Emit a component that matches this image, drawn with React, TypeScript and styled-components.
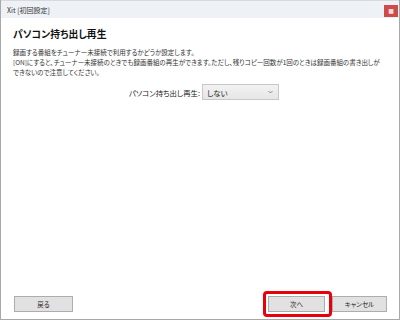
import React from "react";
import styled, { createGlobalStyle } from "styled-components";

const GlobalStyle = createGlobalStyle`
  html, body {
    margin: 0;
    padding: 0;
    background: #ffffff;
  }
  body {
    font-family: "Noto Sans CJK JP", "Noto Sans", sans-serif;
    font-feature-settings: "palt";
  }
`;

const Window = styled.div`
  width: 400px;
  height: 320px;
  box-sizing: border-box;
  display: flex;
  flex-direction: column;
  background: #ffffff;
  border-left: 1px solid #a8a8a8;
  border-right: 1px solid #a8a8a8;
  border-bottom: 1px solid #a8a8a8;
  overflow: hidden;
`;

const TitleBar = styled.div`
  height: 18px;
  flex: none;
  display: flex;
  align-items: center;
  justify-content: space-between;
  padding: 0 1px 0 6px;
  background: #eef2f7;
  border-top: 1px solid #d6d9de;
  box-sizing: border-box;
`;

const TitleText = styled.span`
  font-size: 7px;
  color: #333333;
`;

const CloseButton = styled.div`
  width: 14px;
  height: 12px;
  margin-top: 2px;
  background: #cf4b4b;
  display: flex;
  align-items: center;
  justify-content: center;
  color: #f4dede;
  font-size: 6px;
  line-height: 1;
  font-family: "DejaVu Sans", sans-serif;
`;

const Content = styled.div`
  flex: 1;
  display: flex;
  flex-direction: column;
  padding: 9px 12px 0 12px;
`;

const Heading = styled.h1`
  margin: 0;
  font-size: 9.8px;
  font-weight: 700;
  color: #111111;
  line-height: 14px;
`;

const Description = styled.div`
  margin-top: 7px;
  font-size: 6.5px;
  line-height: 9.8px;
  color: #333333;
`;

const DescLine = styled.div`
  white-space: nowrap;
`;

const SettingRow = styled.div`
  display: flex;
  align-items: center;
  justify-content: center;
  gap: 2px;
  margin-top: 7px;
  padding-left: 8px;
`;

const SettingLabel = styled.span`
  font-size: 7.4px;
  color: #222222;
`;

const SelectBox = styled.div`
  width: 77px;
  height: 16px;
  box-sizing: border-box;
  display: flex;
  align-items: center;
  justify-content: space-between;
  padding: 0 5px 0 4px;
  border: 1px solid #c8c8c8;
  background: linear-gradient(#f2f2f2, #e6e6e6);
  font-size: 7.4px;
  color: #222222;
`;

const Chevron = styled.svg`
  width: 5px;
  height: 4px;
`;

const Footer = styled.div`
  flex: none;
  height: 26px;
  display: flex;
  align-items: flex-start;
  padding: 4px 12px 0 13px;
  box-sizing: border-box;
  margin-bottom: 1px;
`;

const Spacer = styled.div`
  flex: 1;
`;

const Button = styled.div<{ $width: number }>`
  width: ${(p) => p.$width}px;
  height: 16px;
  box-sizing: border-box;
  display: flex;
  align-items: center;
  justify-content: center;
  background: #e1e1e1;
  border: 1px solid #adadad;
  font-size: 6.5px;
  color: #222222;
`;

const Highlight = styled.div`
  position: relative;
  margin-right: 7px;

  &::after {
    content: "";
    position: absolute;
    left: -5px;
    right: -7px;
    top: -5px;
    bottom: -5px;
    border: 3px solid #e8000b;
    border-radius: 4px;
  }
`;

export default function App() {
  return (
    <>
      <GlobalStyle />
      <Window>
        <TitleBar>
          <TitleText>Xit [初回設定]</TitleText>
          <CloseButton>■</CloseButton>
        </TitleBar>
        <Content>
          <Heading>パソコン持ち出し再生</Heading>
          <Description>
            <DescLine>録画する番組をチューナー未接続で利用するかどうか設定します。</DescLine>
            <DescLine>
              [ON]にすると、チューナー未接続のときでも録画番組の再生ができます。ただし、残りコピー回数が1回のときは録画番組の書き出しが
            </DescLine>
            <DescLine>できないので注意してください。</DescLine>
          </Description>
          <SettingRow>
            <SettingLabel>パソコン持ち出し再生:</SettingLabel>
            <SelectBox>
              <span>しない</span>
              <Chevron viewBox="0 0 5 4">
                <path d="M0.5 1 L2.5 3 L4.5 1" fill="none" stroke="#777" strokeWidth="0.8" />
              </Chevron>
            </SelectBox>
          </SettingRow>
        </Content>
        <Footer>
          <Button $width={59}>戻る</Button>
          <Spacer />
          <Highlight>
            <Button $width={57}>次へ</Button>
          </Highlight>
          <Button $width={55}>キャンセル</Button>
        </Footer>
      </Window>
    </>
  );
}
